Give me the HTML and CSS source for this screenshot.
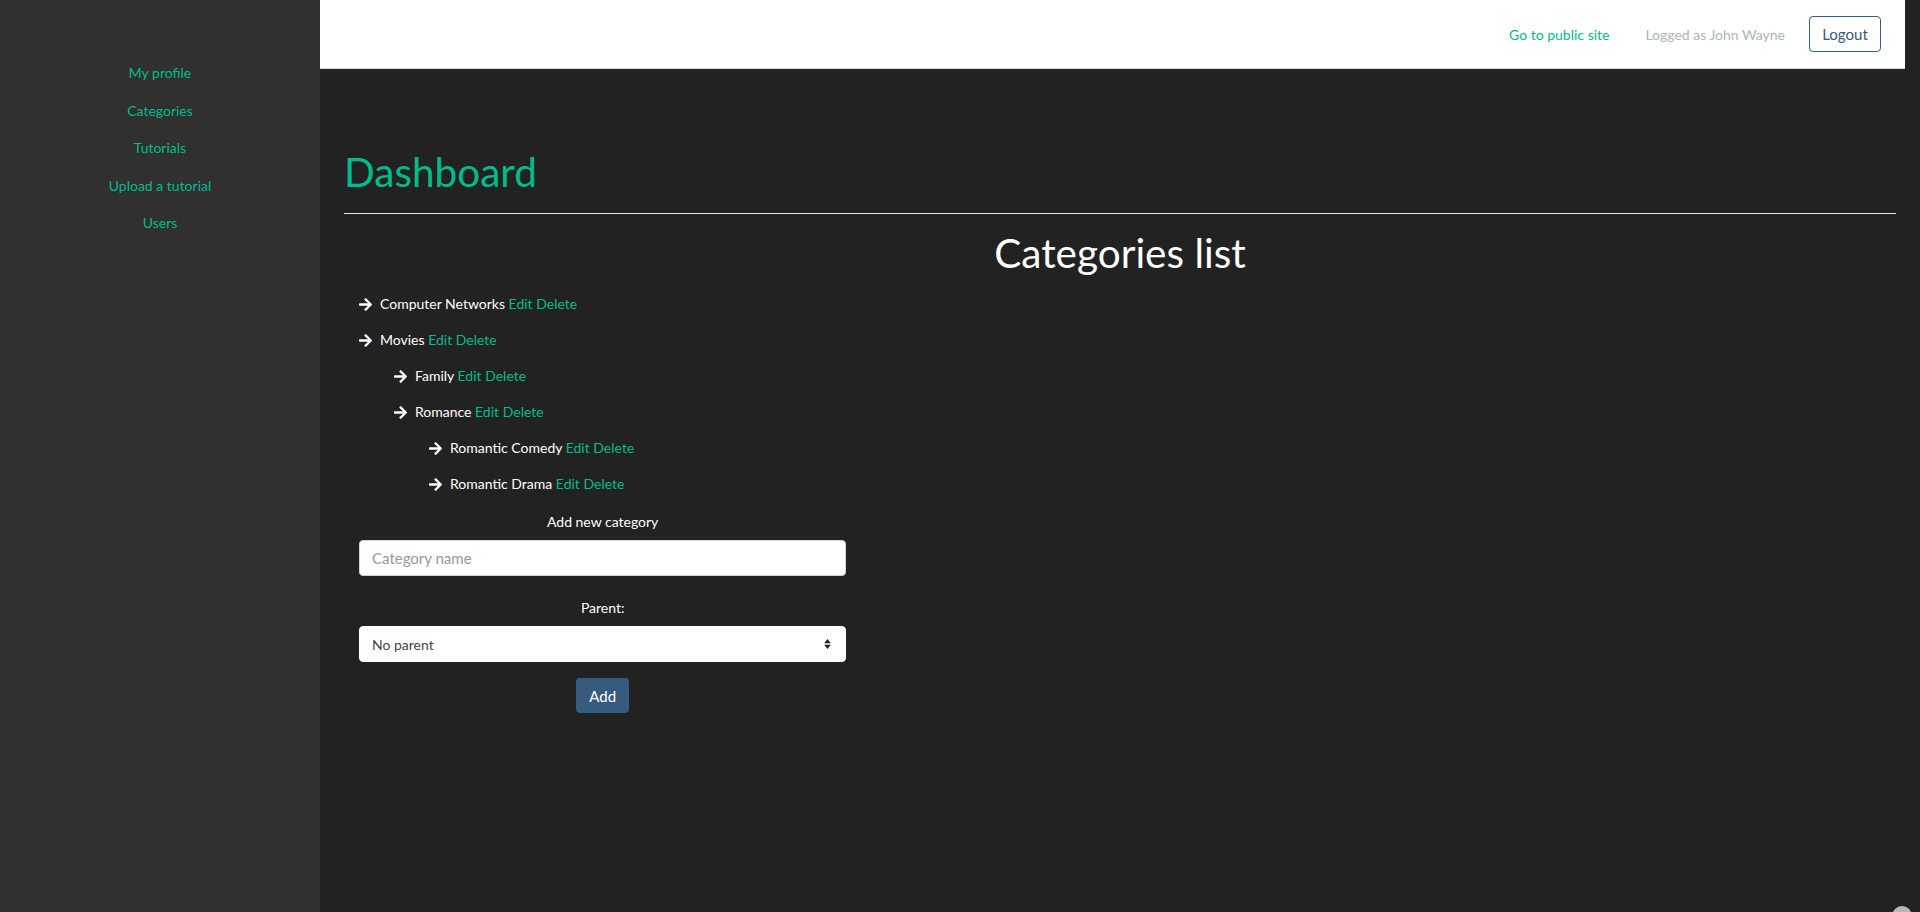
FILE: index.html
```html
<!DOCTYPE html>
<html lang="en">
<head>
<meta charset="utf-8">
<title>Dashboard - Categories</title>
<link rel="stylesheet" href="styles.css">
</head>
<body>
<div class="layout">
  <aside class="sidebar">
    <nav class="side-nav">
      <a href="#">My profile</a>
      <a href="#">Categories</a>
      <a href="#">Tutorials</a>
      <a href="#">Upload a tutorial</a>
      <a href="#">Users</a>
    </nav>
  </aside>
  <div class="main">
    <header class="topbar">
      <a class="public-link" href="#">Go to public site</a>
      <span class="logged">Logged as John Wayne</span>
      <button class="btn-logout">Logout</button>
    </header>
    <section class="content">
      <h1 class="page-title">Dashboard</h1>
      <hr class="divider">
      <h2 class="section-title">Categories list</h2>
      <div class="col">
        <ul class="cat-list">
          <li class="lvl0"><svg class="arrow" viewBox="0 0 448 512"><path d="M190.5 66.9l22.2-22.2c9.4-9.4 24.6-9.4 33.9 0L441 239c9.4 9.4 9.4 24.6 0 33.9L246.6 467.3c-9.4 9.4-24.6 9.4-33.9 0l-22.2-22.2c-9.5-9.5-9.3-25 .4-34.3L311.4 296H24c-13.3 0-24-10.7-24-24v-32c0-13.3 10.7-24 24-24h287.4L190.9 101.2c-9.8-9.3-10-24.8-.4-34.3z"/></svg><span>Computer Networks <a href="#">Edit</a> <a href="#">Delete</a></span></li>
          <li class="lvl0"><svg class="arrow" viewBox="0 0 448 512"><path d="M190.5 66.9l22.2-22.2c9.4-9.4 24.6-9.4 33.9 0L441 239c9.4 9.4 9.4 24.6 0 33.9L246.6 467.3c-9.4 9.4-24.6 9.4-33.9 0l-22.2-22.2c-9.5-9.5-9.3-25 .4-34.3L311.4 296H24c-13.3 0-24-10.7-24-24v-32c0-13.3 10.7-24 24-24h287.4L190.9 101.2c-9.8-9.3-10-24.8-.4-34.3z"/></svg><span>Movies <a href="#">Edit</a> <a href="#">Delete</a></span></li>
          <li class="lvl1"><svg class="arrow" viewBox="0 0 448 512"><path d="M190.5 66.9l22.2-22.2c9.4-9.4 24.6-9.4 33.9 0L441 239c9.4 9.4 9.4 24.6 0 33.9L246.6 467.3c-9.4 9.4-24.6 9.4-33.9 0l-22.2-22.2c-9.5-9.5-9.3-25 .4-34.3L311.4 296H24c-13.3 0-24-10.7-24-24v-32c0-13.3 10.7-24 24-24h287.4L190.9 101.2c-9.8-9.3-10-24.8-.4-34.3z"/></svg><span>Family <a href="#">Edit</a> <a href="#">Delete</a></span></li>
          <li class="lvl1"><svg class="arrow" viewBox="0 0 448 512"><path d="M190.5 66.9l22.2-22.2c9.4-9.4 24.6-9.4 33.9 0L441 239c9.4 9.4 9.4 24.6 0 33.9L246.6 467.3c-9.4 9.4-24.6 9.4-33.9 0l-22.2-22.2c-9.5-9.5-9.3-25 .4-34.3L311.4 296H24c-13.3 0-24-10.7-24-24v-32c0-13.3 10.7-24 24-24h287.4L190.9 101.2c-9.8-9.3-10-24.8-.4-34.3z"/></svg><span>Romance <a href="#">Edit</a> <a href="#">Delete</a></span></li>
          <li class="lvl2"><svg class="arrow" viewBox="0 0 448 512"><path d="M190.5 66.9l22.2-22.2c9.4-9.4 24.6-9.4 33.9 0L441 239c9.4 9.4 9.4 24.6 0 33.9L246.6 467.3c-9.4 9.4-24.6 9.4-33.9 0l-22.2-22.2c-9.5-9.5-9.3-25 .4-34.3L311.4 296H24c-13.3 0-24-10.7-24-24v-32c0-13.3 10.7-24 24-24h287.4L190.9 101.2c-9.8-9.3-10-24.8-.4-34.3z"/></svg><span>Romantic Comedy <a href="#">Edit</a> <a href="#">Delete</a></span></li>
          <li class="lvl2"><svg class="arrow" viewBox="0 0 448 512"><path d="M190.5 66.9l22.2-22.2c9.4-9.4 24.6-9.4 33.9 0L441 239c9.4 9.4 9.4 24.6 0 33.9L246.6 467.3c-9.4 9.4-24.6 9.4-33.9 0l-22.2-22.2c-9.5-9.5-9.3-25 .4-34.3L311.4 296H24c-13.3 0-24-10.7-24-24v-32c0-13.3 10.7-24 24-24h287.4L190.9 101.2c-9.8-9.3-10-24.8-.4-34.3z"/></svg><span>Romantic Drama <a href="#">Edit</a> <a href="#">Delete</a></span></li>
        </ul>
        <form class="add-form">
          <label class="form-label">Add new category</label>
          <input class="form-control" type="text" placeholder="Category name">
          <label class="form-label label-parent">Parent:</label>
          <div class="select-wrap">
            <select class="form-control form-select">
              <option>No parent</option>
            </select>
            <svg class="select-arrows" viewBox="0 0 8 12"><path d="M4 0L8 5H0z M4 12L0 7H8z"/></svg>
          </div>
          <button type="button" class="btn-add">Add</button>
        </form>
      </div>
    </section>
  </div>
</div>
<div class="float-dot"></div>
</body>
</html>
```
FILE: styles.css
```css
html, body {
  margin: 0;
  padding: 0;
  height: 100%;
}
body {
  background: #222222;
  font-family: Lato, "Open Sans", "Liberation Sans", sans-serif;
  font-size: 14px;
  line-height: 1.5;
  color: #ffffff;
  overflow: hidden;
}
a {
  color: #00bc8c;
  text-decoration: none;
}
.layout {
  display: flex;
  height: 912px;
}
.sidebar {
  width: 320px;
  flex: none;
  background: #303030;
}
.side-nav {
  display: flex;
  flex-direction: column;
  align-items: center;
  padding-top: 54px;
}
.side-nav a {
  line-height: 21px;
  padding: 8.25px 0;
}
.main {
  flex: 1;
  display: flex;
  flex-direction: column;
  min-width: 0;
}
.topbar {
  height: 68px;
  background: #ffffff;
  border-bottom: 1px solid #dcdce6;
  margin-right: 15px;
  display: flex;
  align-items: center;
  justify-content: flex-end;
  padding-right: 24px;
  box-sizing: content-box;
}
.logged {
  color: #adb5bd;
  margin-left: 36px;
}
.btn-logout {
  margin-left: 24px;
  height: 36px;
  width: 72px;
  background: #ffffff;
  border: 1px solid #375a7f;
  border-radius: 4px;
  color: #375a7f;
  font-family: inherit;
  font-size: 15px;
  padding: 0;
}
.content {
  padding: 0 24px;
}
.page-title {
  margin: 79px 0 0;
  font-size: 40.5px;
  font-weight: 400;
  line-height: 1.2;
  color: #00bc8c;
}
.divider {
  margin: 16px 0 0;
  border: 0;
  border-top: 1px solid #e8e8e8;
}
.section-title {
  margin: 15px 0 0;
  font-size: 40.5px;
  font-weight: 400;
  line-height: 1.2;
  text-align: center;
  color: #ffffff;
}
.col {
  width: 33.3333%;
  box-sizing: border-box;
  padding: 0 15px;
}
.cat-list {
  list-style: none;
  margin: 9px 0 0;
  padding: 0;
}
.cat-list li {
  line-height: 22px;
  padding: 7px 0;
  display: flex;
  align-items: center;
}
.cat-list li.lvl1 { padding-left: 35px; }
.cat-list li.lvl2 { padding-left: 70px; }
.arrow {
  width: 13px;
  height: 15px;
  fill: #ffffff;
  margin-right: 8px;
  flex: none;
}
.add-form {
  display: flex;
  flex-direction: column;
  align-items: center;
}
.form-label {
  display: block;
  line-height: 22px;
  margin-top: 9px;
  margin-bottom: 7px;
}
.label-parent {
  margin-top: 21px;
  margin-bottom: 7px;
}
.form-control {
  width: 100%;
  box-sizing: border-box;
  height: 36px;
  border: 1px solid #ced4da;
  border-radius: 4px;
  background: #ffffff;
  padding: 6px 12px;
  font-family: inherit;
  font-size: 15px;
  color: #444444;
  outline: none;
}
.form-control::placeholder {
  color: #999999;
}
.select-wrap {
  position: relative;
  width: 100%;
}
.form-select {
  appearance: none;
  -webkit-appearance: none;
  font-size: 14px;
  border-color: #ffffff;
}
.select-arrows {
  position: absolute;
  right: 15px;
  top: 13px;
  width: 7px;
  height: 10px;
  fill: #222222;
}
.btn-add {
  margin-top: 16px;
  height: 35px;
  width: 53px;
  background: #375a7f;
  border: 0;
  border-radius: 4px;
  color: #ffffff;
  font-family: inherit;
  font-size: 15px;
  padding: 0;
}
.float-dot {
  position: fixed;
  right: 8px;
  bottom: -14px;
  width: 20px;
  height: 20px;
  border-radius: 50%;
  background: #b8b8b8;
}
```
